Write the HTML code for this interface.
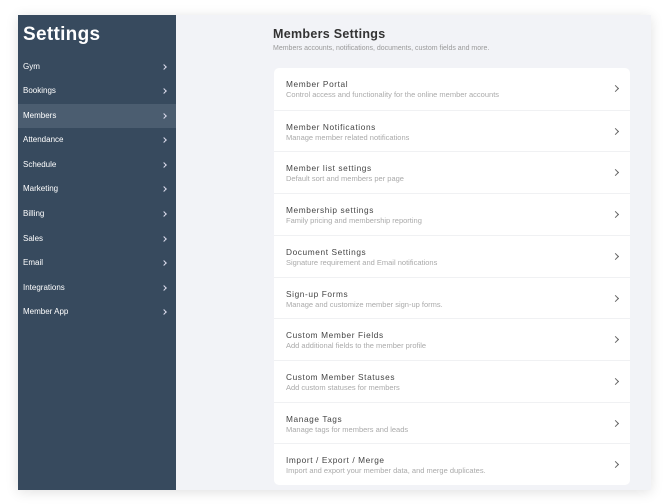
<!DOCTYPE html>
<html><head><style>
*{margin:0;padding:0;box-sizing:border-box}
body{width:670px;height:504px;background:#fff;font-family:"Liberation Sans",sans-serif;position:relative;overflow:hidden}
.frame{position:absolute;left:18px;top:15px;width:633px;height:475px;background:#f2f3f7;box-shadow:0 2px 12px rgba(0,0,0,.12)}
.side{position:absolute;left:0;top:0;width:158px;height:475px;background:#374a5e}
.side h1{position:absolute;left:5px;top:9px;color:#fff;font-size:19px;font-weight:bold;letter-spacing:.3px}
.item{position:absolute;left:0;width:158px;height:24px;color:#fff;font-size:8px;line-height:24px;padding-left:5px}
.item.act{background:#4b5d70}
.item::after{content:"";position:absolute;right:10px;top:10px;width:3px;height:3px;border-right:1px solid #dde;border-top:1px solid #dde;transform:rotate(45deg)}
.title{position:absolute;left:255px;top:12px;font-size:12.5px;color:#333;letter-spacing:.3px;font-weight:bold}
.sub{position:absolute;left:255px;top:30px;font-size:7px;color:#999}
.card{position:absolute;left:256px;top:53px;width:356px;height:417px;background:#fff;border-radius:5px}
.row{position:absolute;left:0;width:356px;height:41.7px;border-top:1px solid #f0f1f3}
.row:first-child{border-top:none}
.row b{position:absolute;left:12px;top:11px;font-weight:normal;font-size:8.3px;color:#444;letter-spacing:.6px}
.row span{position:absolute;left:12px;top:22px;font-size:7.5px;color:#aaa}
.row::after{content:"";position:absolute;right:12px;top:18px;width:4px;height:4px;border-right:1px solid #666;border-top:1px solid #666;transform:rotate(45deg)}
</style></head><body>
<div class="frame">
<div class="side"><h1>Settings</h1>
<div class="item" style="top:40px">Gym</div>
<div class="item" style="top:64px">Bookings</div>
<div class="item act" style="top:89px">Members</div>
<div class="item" style="top:113px">Attendance</div>
<div class="item" style="top:138px">Schedule</div>
<div class="item" style="top:162px">Marketing</div>
<div class="item" style="top:187px">Billing</div>
<div class="item" style="top:212px">Sales</div>
<div class="item" style="top:236px">Email</div>
<div class="item" style="top:261px">Integrations</div>
<div class="item" style="top:285px">Member App</div>
</div>
<div class="title">Members Settings</div>
<div class="sub">Members accounts, notifications, documents, custom fields and more.</div>
<div class="card">
<div class="row" style="top:0"><b>Member Portal</b><span>Control access and functionality for the online member accounts</span></div>
<div class="row" style="top:41.7px"><b>Member Notifications</b><span>Manage member related notifications</span></div>
<div class="row" style="top:83.4px"><b>Member list settings</b><span>Default sort and members per page</span></div>
<div class="row" style="top:125.1px"><b>Membership settings</b><span>Family pricing and membership reporting</span></div>
<div class="row" style="top:166.8px"><b>Document Settings</b><span>Signature requirement and Email notifications</span></div>
<div class="row" style="top:208.5px"><b>Sign-up Forms</b><span>Manage and customize member sign-up forms.</span></div>
<div class="row" style="top:250.2px"><b>Custom Member Fields</b><span>Add additional fields to the member profile</span></div>
<div class="row" style="top:291.9px"><b>Custom Member Statuses</b><span>Add custom statuses for members</span></div>
<div class="row" style="top:333.6px"><b>Manage Tags</b><span>Manage tags for members and leads</span></div>
<div class="row" style="top:375.3px"><b>Import / Export / Merge</b><span>Import and export your member data, and merge duplicates.</span></div>
</div>
</div>
</body></html>
